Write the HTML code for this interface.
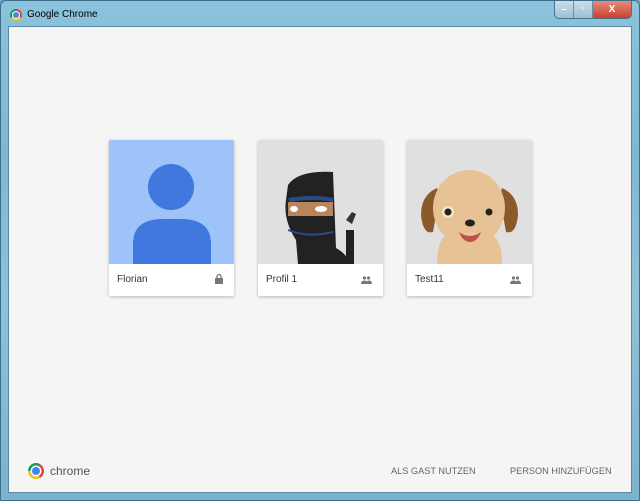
<!DOCTYPE html>
<html><head><meta charset="utf-8"><style>
*{margin:0;padding:0;box-sizing:border-box}
html,body{width:640px;height:501px;overflow:hidden;background:#6fa8c4;font-family:"Liberation Sans",Arial,sans-serif}
.frame{position:absolute;left:0;top:0;width:640px;height:501px;background:linear-gradient(180deg,#8cc3dc 0%,#7fb6d1 30%,#8ec2d8 60%,#7cb2cc 100%);border:1px solid #3d6e88;border-radius:6px 6px 2px 2px}
.title{position:absolute;left:27px;top:9px;font-size:10px;color:#000}
.logo{position:absolute;left:10px;top:9px;width:12px;height:12px;border-radius:50%;background:conic-gradient(#db4437 0 120deg,#f4c20d 120deg 240deg,#0f9d58 240deg 360deg)}
.logo:after{content:"";position:absolute;left:3px;top:3px;width:6px;height:6px;border-radius:50%;background:#4285f4;box-shadow:0 0 0 1px #fff}
.btns{position:absolute;left:554px;top:1px;width:78px;height:18px;display:flex;border:1px solid #4a6f86;border-top:none;border-radius:0 0 5px 5px;overflow:hidden}
.btns div{height:100%;display:flex;align-items:center;justify-content:center;font-size:10px;font-weight:bold;color:#fff}
.b1,.b2{width:19px;background:linear-gradient(#c9dfeb,#9dbfd3);border-right:1px solid #6a8ea4}
.b3{flex:1;background:linear-gradient(#e58d7d,#c9412c)}
.client{position:absolute;left:8px;top:26px;width:624px;height:467px;background:#f5f5f5;border:1px solid #5a8aa3}
.card{position:absolute;top:113px;width:125px;height:156px;background:#fff;box-shadow:0 1px 3px rgba(0,0,0,.25);border-radius:2px;overflow:hidden}
.img{height:124px;background:#e0e0e0;position:relative;overflow:hidden}
.lbl{position:absolute;left:8px;top:134px;font-size:10px;color:#333}
.ic{position:absolute;right:11px;top:136px}
.foot{position:absolute;top:439px;font-size:9.2px;color:#666}
</style></head><body>
<div class="frame"></div>
<div class="logo"></div>
<div class="title">Google Chrome</div>
<div class="btns"><div class="b1">–</div><div class="b2">▫</div><div class="b3">X</div></div>
<div class="client">
 <div class="card" style="left:100px">
  <div class="img" style="background:#9ec2fa">
   <svg width="125" height="124"><circle cx="62" cy="47" r="23" fill="#3f78de"/><path d="M24 124V104Q24 79 54 79H72Q102 79 102 104V124Z" fill="#3f78de"/></svg>
  </div>
  <div class="lbl">Florian</div>
  <svg class="ic" style="top:133px;right:10px" width="10" height="12"><rect x="1" y="5" width="8" height="6" fill="#777"/><path d="M3 5V3.5a2 2 0 0 1 4 0V5" stroke="#777" stroke-width="1.3" fill="none"/></svg>
 </div>
 <div class="card" style="left:249px">
  <div class="img">
   <svg width="125" height="124"><path d="M30 45Q40 30 75 32L78 108Q90 115 92 124H40L38 100Q25 80 28 60Z" fill="#222"/><path d="M88 80l6-8 4 2-4 10z" fill="#333"/><rect x="88" y="90" width="8" height="34" fill="#222"/><path d="M30 58Q55 54 75 58V62Q55 58 32 62Z" fill="#2a4a8a"/><rect x="30" y="62" width="45" height="14" fill="#b9855a"/><ellipse cx="36" cy="69" rx="4" ry="3" fill="#fff"/><ellipse cx="63" cy="69" rx="6" ry="3" fill="#fff"/><path d="M30 90Q50 98 75 92" stroke="#2a4a8a" stroke-width="2" fill="none"/></svg>
  </div>
  <div class="lbl">Profil 1</div>
  <svg class="ic" width="11" height="8"><circle cx="3.5" cy="2" r="1.6" fill="#777"/><circle cx="7.5" cy="2" r="1.6" fill="#777"/><path d="M0 8Q0 4.5 3.5 4.5Q7 4.5 7 8ZM5 8Q5.5 4.5 8 4.5Q11 4.5 11 8Z" fill="#777"/></svg>
 </div>
 <div class="card" style="left:398px">
  <div class="img">
   <svg width="125" height="124"><path d="M30 124Q30 100 40 95H85Q95 100 95 124Z" fill="#e7c295"/><path d="M30 48Q14 55 14 75Q16 95 26 92Q30 70 32 55Z" fill="#8a5a2b"/><path d="M95 48Q111 55 111 75Q109 95 99 92Q95 70 93 55Z" fill="#8a5a2b"/><ellipse cx="62" cy="68" rx="36" ry="38" fill="#e7c295"/><circle cx="41" cy="72" r="6" fill="#f5e3c8"/><circle cx="41" cy="72" r="3.5" fill="#222"/><circle cx="82" cy="72" r="3.5" fill="#222"/><ellipse cx="63" cy="83" rx="5" ry="3.5" fill="#222"/><path d="M52 92Q63 100 74 92Q70 102 63 102Q56 102 52 92Z" fill="#c0504a"/></svg>
  </div>
  <div class="lbl">Test11</div>
  <svg class="ic" width="11" height="8"><circle cx="3.5" cy="2" r="1.6" fill="#777"/><circle cx="7.5" cy="2" r="1.6" fill="#777"/><path d="M0 8Q0 4.5 3.5 4.5Q7 4.5 7 8ZM5 8Q5.5 4.5 8 4.5Q11 4.5 11 8Z" fill="#777"/></svg>
 </div>
 <div style="position:absolute;left:19px;top:436px;width:16px;height:16px;border-radius:50%;background:conic-gradient(from 30deg,#db4437 0 120deg,#f4c20d 120deg 240deg,#0f9d58 240deg 360deg)"><div style="position:absolute;left:4px;top:4px;width:8px;height:8px;border-radius:50%;background:#4285f4;box-shadow:0 0 0 1.5px #fff"></div></div>
 <div style="position:absolute;left:41px;top:437px;font-size:12px;color:#555">chrome</div>
 <div class="foot" style="left:382px">ALS GAST NUTZEN</div>
 <div class="foot" style="left:501px">PERSON HINZUFÜGEN</div>
</div>
</body></html>
